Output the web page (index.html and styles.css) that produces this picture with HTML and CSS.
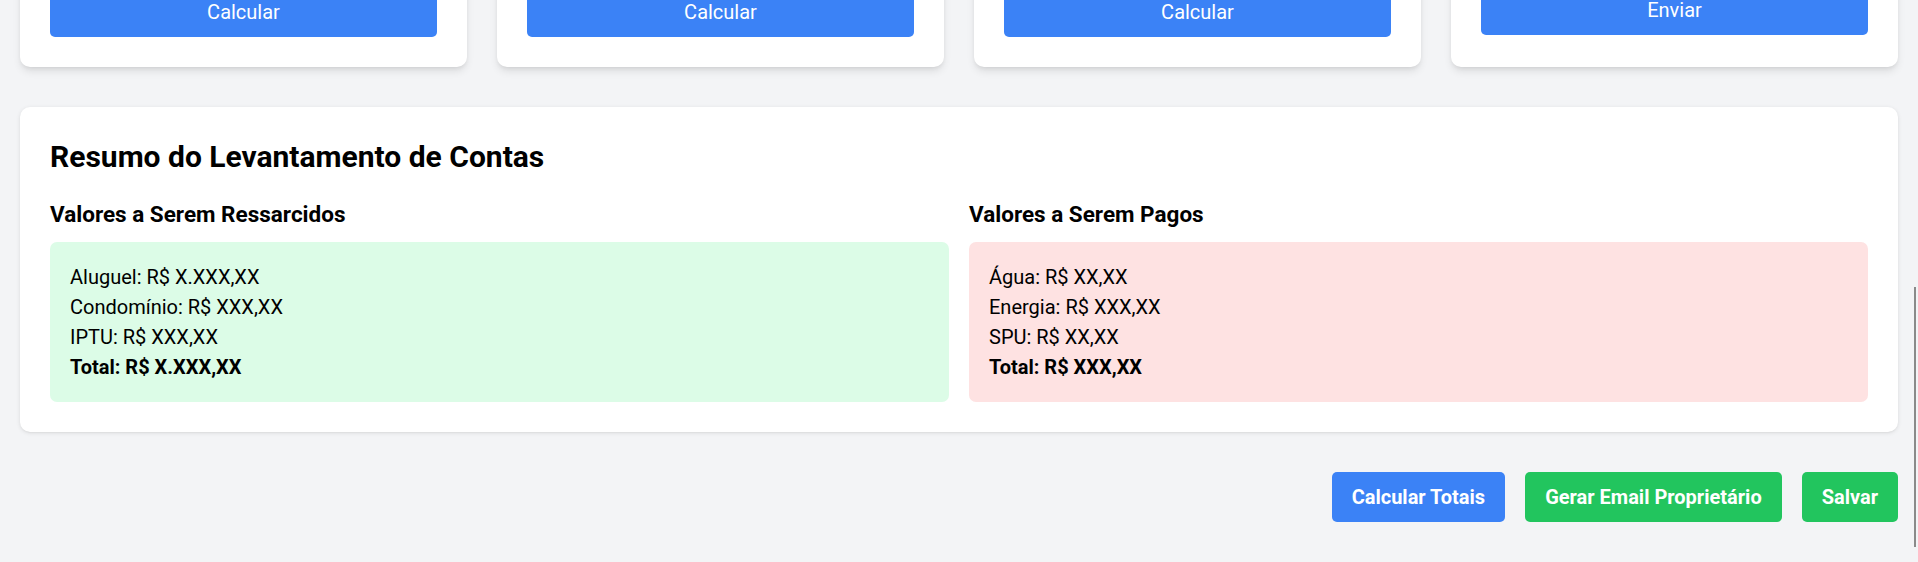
FILE: index.html
```html
<!DOCTYPE html>
<html lang="pt-BR">
<head>
<meta charset="utf-8">
<title>Levantamento de Contas</title>
<link rel="stylesheet" href="styles.css">
</head>
<body>
<main class="page">
  <section class="calc-grid">
    <div class="card">
      <div class="card-actions"><button class="btn btn-block">Calcular</button></div>
    </div>
    <div class="card">
      <div class="card-actions"><button class="btn btn-block">Calcular</button></div>
    </div>
    <div class="card">
      <div class="card-actions"><button class="btn btn-block">Calcular</button></div>
    </div>
    <div class="card">
      <div class="card-actions card-actions-send"><button class="btn btn-block">Enviar</button></div>
    </div>
  </section>

  <section class="summary">
    <h2 class="summary-title">Resumo do Levantamento de Contas</h2>
    <div class="summary-cols">
      <div class="summary-col">
        <h3 class="col-title">Valores a Serem Ressarcidos</h3>
        <div class="box box-green">
          <p>Aluguel: R$ X.XXX,XX</p>
          <p>Condomínio: R$ XXX,XX</p>
          <p>IPTU: R$ XXX,XX</p>
          <p class="total">Total: R$ X.XXX,XX</p>
        </div>
      </div>
      <div class="summary-col">
        <h3 class="col-title">Valores a Serem Pagos</h3>
        <div class="box box-red">
          <p>Água: R$ XX,XX</p>
          <p>Energia: R$ XXX,XX</p>
          <p>SPU: R$ XX,XX</p>
          <p class="total">Total: R$ XXX,XX</p>
        </div>
      </div>
    </div>
  </section>

  <div class="actions">
    <button class="btn btn-strong">Calcular Totais</button>
    <button class="btn btn-strong btn-green">Gerar Email Proprietário</button>
    <button class="btn btn-strong btn-green">Salvar</button>
  </div>
</main>
<div class="scroll-thumb"></div>
</body>
</html>
```

FILE: styles.css
```css
* {
  box-sizing: border-box;
}

html, body {
  margin: 0;
  height: 100%;
}

body {
  background: #f3f4f6;
  font-family: Roboto, "Liberation Sans", Arial, sans-serif;
  color: #000;
  overflow: hidden;
  display: flex;
  flex-direction: column;
  justify-content: flex-end;
}

.page {
  flex-shrink: 0;
  padding: 20px 20px 40px 20px;
}

.calc-grid {
  display: grid;
  grid-template-columns: repeat(4, 1fr);
  gap: 30px;
  margin-bottom: 40px;
}

.card {
  background: #fff;
  border-radius: 10px;
  padding: 30px;
  min-height: 160px;
  box-shadow: 0 5px 8px -1px rgba(0, 0, 0, 0.1), 0 2px 5px -2px rgba(0, 0, 0, 0.1);
  display: flex;
  flex-direction: column;
}

.card-actions {
  margin-top: auto;
}

.card-actions-send {
  margin-bottom: 2px;
}

.btn {
  font-family: Roboto, "Liberation Sans", Arial, sans-serif;
  font-size: 20px;
  line-height: 30px;
  color: #fff;
  background: #3b82f6;
  border: 0;
  border-radius: 5px;
  padding: 10px 20px;
  cursor: pointer;
}

.btn-block {
  display: block;
  width: 100%;
}

.btn-strong {
  font-weight: 700;
}

.btn-green {
  background: #22c55e;
}

.summary {
  background: #fff;
  border-radius: 10px;
  padding: 30px;
  box-shadow: 0 1px 4px rgba(0, 0, 0, 0.1), 0 1px 2px -1px rgba(0, 0, 0, 0.1);
}

.summary-title {
  margin: 0 0 20px 0;
  font-size: 30px;
  line-height: 40px;
  font-weight: 700;
}

.summary-cols {
  display: grid;
  grid-template-columns: 1fr 1fr;
  gap: 20px;
}

.col-title {
  margin: 0 0 10px 0;
  font-size: 22.5px;
  line-height: 35px;
  font-weight: 700;
}

.box {
  border-radius: 7px;
  padding: 20px;
}

.box p {
  margin: 0;
  font-size: 20px;
  line-height: 30px;
}

.box .total {
  font-weight: 700;
}

.box-green {
  background: #dcfce7;
}

.box-red {
  background: #fee2e2;
}

.actions {
  display: flex;
  justify-content: flex-end;
  gap: 20px;
  margin-top: 40px;
}

.scroll-thumb {
  position: fixed;
  right: 2px;
  top: 287px;
  width: 2px;
  height: 260px;
  background: #8a8a8a;
}
```
